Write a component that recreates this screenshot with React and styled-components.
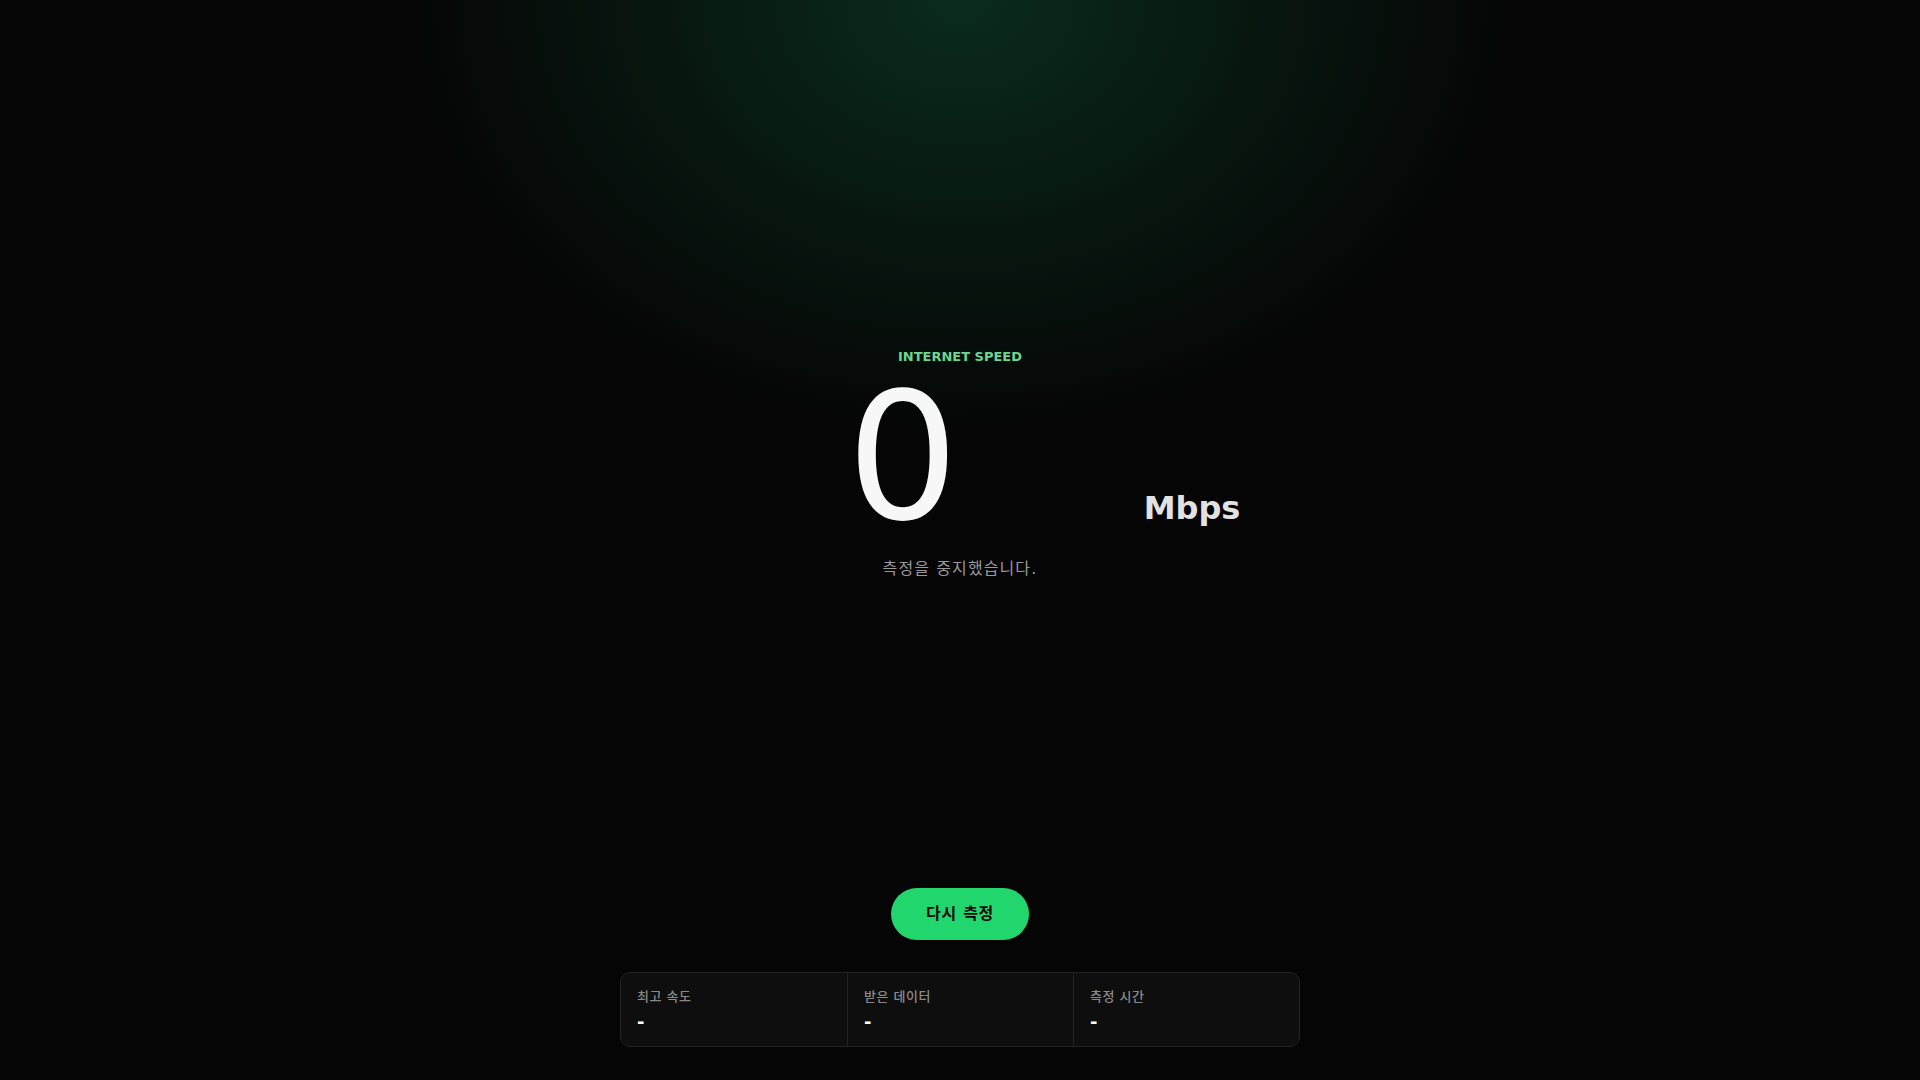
import React from "react";
import styled, { createGlobalStyle } from "styled-components";

const GlobalStyle = createGlobalStyle`
  html, body {
    margin: 0;
    padding: 0;
    background: #050505;
  }
  body {
    font-family: "DejaVu Sans", "Noto Sans CJK KR", sans-serif;
    color: #f5f5f5;
  }
  * { box-sizing: border-box; }
`;

const Page = styled.main`
  min-height: 100vh;
  display: flex;
  flex-direction: column;
  align-items: center;
  padding: 349px 0 33px;
  background:
    radial-gradient(ellipse 560px 440px at 50% 0%, rgba(16, 90, 58, 0.45), rgba(5, 5, 5, 0) 100%),
    #050505;
`;

const Hero = styled.section`
  display: flex;
  flex-direction: column;
  align-items: center;
`;

const Eyebrow = styled.div`
  font-size: 13px;
  line-height: 16px;
  font-weight: 700;
  color: #6ad891;
  margin-bottom: 6px;
`;

const SpeedRow = styled.div`
  display: flex;
  align-items: baseline;
  gap: 18px;
`;

const SpeedValue = styled.div`
  width: 446px;
  text-align: center;
  font-size: 176px;
  line-height: 1;
  font-weight: 400;
  color: #f7f7f7;
`;

const Unit = styled.span`
  font-size: 32px;
  font-weight: 700;
  color: #e2e2e2;
`;

const Status = styled.p`
  margin: 10px 0 0;
  font-size: 16px;
  line-height: 24px;
  letter-spacing: 1.1px;
  color: #9a9a9a;
`;

const Bottom = styled.section`
  margin-top: auto;
  display: flex;
  flex-direction: column;
  align-items: center;
  gap: 32px;
`;

const RetryButton = styled.button`
  border: none;
  border-radius: 999px;
  background: #22d66e;
  color: #0a0a0a;
  font-family: inherit;
  font-size: 16px;
  line-height: 24px;
  font-weight: 700;
  letter-spacing: 0.7px;
  padding: 14px 35px;
  cursor: pointer;
`;

const Stats = styled.div`
  width: 680px;
  display: grid;
  grid-template-columns: repeat(3, 1fr);
  border: 1px solid #232323;
  border-radius: 10px;
  background: #0e0e0e;
  overflow: hidden;
`;

const Stat = styled.div`
  display: flex;
  flex-direction: column;
  gap: 7px;
  padding: 16px 16px 14px;
  border-left: ${(p) => (p.$first ? "none" : "1px solid #232323")};
`;

const StatLabel = styled.span`
  font-size: 13px;
  line-height: 16px;
  font-weight: 500;
  letter-spacing: 0.5px;
  color: #8a8a8a;
`;

const StatValue = styled.span`
  font-size: 18px;
  line-height: 20px;
  font-weight: 700;
  color: #ffffff;
`;

const stats = [
  { label: "최고 속도", value: "-" },
  { label: "받은 데이터", value: "-" },
  { label: "측정 시간", value: "-" },
];

export default function App() {
  return (
    <>
      <GlobalStyle />
      <Page>
        <Hero>
          <Eyebrow>INTERNET SPEED</Eyebrow>
          <SpeedRow>
            <SpeedValue>0</SpeedValue>
            <Unit>Mbps</Unit>
          </SpeedRow>
          <Status>측정을 중지했습니다.</Status>
        </Hero>
        <Bottom>
          <RetryButton>다시 측정</RetryButton>
          <Stats>
            {stats.map((s, i) => (
              <Stat key={s.label} $first={i === 0}>
                <StatLabel>{s.label}</StatLabel>
                <StatValue>{s.value}</StatValue>
              </Stat>
            ))}
          </Stats>
        </Bottom>
      </Page>
    </>
  );
}
